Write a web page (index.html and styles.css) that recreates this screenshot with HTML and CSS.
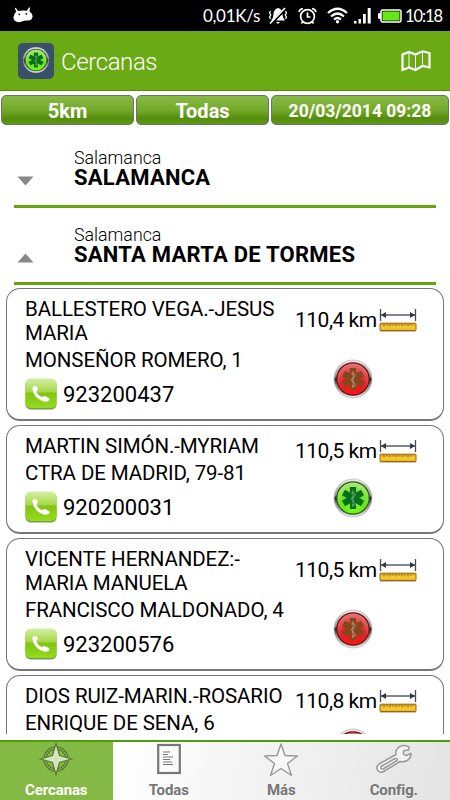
FILE: index.html
```
<!DOCTYPE html>
<html lang="es">
<head>
  <meta charset="UTF-8">
  <title>Cercanas</title>
  <link rel="stylesheet" href="styles.css">
</head>
<body>
  <!-- iconos compartidos -->
  <svg class="defs" width="0" height="0">
    <defs>
      <linearGradient id="metal" x1="0" y1="0" x2="0" y2="1">
        <stop offset="0" stop-color="#eee"/><stop offset=".42" stop-color="#999"/>
        <stop offset=".5" stop-color="#222"/><stop offset=".65" stop-color="#888"/><stop offset="1" stop-color="#e8e8e8"/>
      </linearGradient>
      <radialGradient id="verde" cx=".5" cy=".75" r=".75">
        <stop offset="0" stop-color="#7cff20"/><stop offset=".5" stop-color="#6be21c"/><stop offset="1" stop-color="#b0e982"/>
      </radialGradient>
      <radialGradient id="rojo" cx=".5" cy=".8" r=".8">
        <stop offset="0" stop-color="#ff1010"/><stop offset=".5" stop-color="#de2428"/><stop offset="1" stop-color="#e27a7b"/>
      </radialGradient>
      <linearGradient id="tel" x1="0" y1="0" x2="0" y2="1">
        <stop offset="0" stop-color="#d5efa5"/><stop offset=".45" stop-color="#a6d848"/>
        <stop offset=".5" stop-color="#80c410"/><stop offset="1" stop-color="#94dc1c"/>
      </linearGradient>
      <linearGradient id="oro" x1="0" y1="0" x2="0" y2="1">
        <stop offset="0" stop-color="#d79a14"/><stop offset=".5" stop-color="#f6cf32"/><stop offset="1" stop-color="#e9b51c"/>
      </linearGradient>
    </defs>
    <symbol id="cruz" viewBox="-12 -12 24 24">
      <g>
        <rect x="-3.1" y="-11" width="6.2" height="22"/>
        <rect x="-3.1" y="-11" width="6.2" height="22" transform="rotate(60)"/>
        <rect x="-3.1" y="-11" width="6.2" height="22" transform="rotate(120)"/>
      </g>
      <path d="M0-8V9M-2-5Q3-6 2-3T-1 0T1 4T-1 7" fill="none" stroke="#fff" stroke-opacity=".35" stroke-width="1"/>
    </symbol>
    <symbol id="abierta" viewBox="0 0 40 40">
      <circle cx="20" cy="20" r="19" fill="url(#metal)" stroke="#bbb" stroke-width=".8"/>
      <circle cx="20" cy="20" r="16.800" fill="#245c10"/>
      <circle cx="20" cy="20" r="15.600" fill="url(#verde)"/>
      <use href="#cruz" x="8" y="8" width="24" height="24" fill="#08701c"/>
    </symbol>
    <symbol id="cerrada" viewBox="0 0 40 40">
      <circle cx="20" cy="20" r="19" fill="url(#metal)" stroke="#bbb" stroke-width=".8"/>
      <circle cx="20" cy="20" r="16.800" fill="#6d0c0c"/>
      <circle cx="20" cy="20" r="15.600" fill="url(#rojo)"/>
      <use href="#cruz" x="8" y="8" width="24" height="24" fill="#85471c"/>
    </symbol>
    <symbol id="telefono" viewBox="0 0 32 32">
      <rect x=".5" y="1.500" width="31" height="30" rx="5" fill="#7a9a4c"/>
      <rect x=".5" y=".5" width="31" height="29.500" rx="5" fill="url(#tel)"/>
      <path d="M7.500 11Q7 8.300 9.500 8Q12 7.800 12.700 10Q13.200 12 11.500 13.200Q12.500 17 17 19.200Q18.600 17.600 20.500 18.300L24 20.300Q25.400 21.500 23.700 23Q20.500 24.800 15.500 22.300Q8.500 18.500 7.500 11Z" fill="#fff"/>
    </symbol>
    <symbol id="regla" viewBox="0 0 38 24">
      <path d="M1.500 1V13M36.500 1V13" stroke="#454a58" stroke-width="1.300"/>
      <path d="M2 7H36" stroke="#5a5d68" stroke-width="1.500"/>
      <path d="M2 7L7 4V10ZM36 7L31 4V10Z" fill="#33363f"/>
      <path d="M1 23.500H37" stroke="#aaa" stroke-width=".7"/>
      <rect x="1" y="15.200" width="36" height="7.300" rx=".6" fill="url(#oro)" stroke="#9b650e"/>
      <path d="M5 16V18.500M8 16V17.500M11 16V18.500M14 16V17.500M17 16V18.500M20 16V17.500M23 16V18.500M26 16V17.500M29 16V18.500M32 16V17.500" stroke="#8a5c10" stroke-width=".8"/>
    </symbol>
  </svg>

  <div class="status">
    <svg class="droid" width="21" height="17" viewBox="0 0 21 17" fill="#fff">
      <path d="M1.800 1.200L2.800 .8L5 4Q9 3.200 14 3.800L16 .3L17 .8L16.500 4.500Q20 7 19.500 10Q18.500 13.500 15.500 13.500Q12 13 9 14.500Q5 16 2 14Q-.5 11.500 1 8.500Q1.500 6 3.300 4.800Z"/>
      <circle cx="6.300" cy="7.300" r=".9" fill="#000"/><circle cx="13.300" cy="6.800" r=".9" fill="#000"/>
    </svg>
    <span class="speed">0,01K/s</span>
    <svg class="st-mute" width="20" height="18" viewBox="0 0 20 18" fill="none" stroke="#fff">
      <path d="M10 1Q14.500 2 14.500 8Q15 11 17 13.500H3Q5.500 11 5.500 7Q6 2 10 1ZM8 15H12L10 17Z" fill="#fff" stroke="none"/>
      <path d="M17.500 1.500L3 17" stroke="#000" stroke-width="3"/>
      <path d="M17 1L2 16.500" stroke-width="1.700"/>
      <path d="M2.500 4L1.500 6L2.800 8L1.500 10L2.500 12M17.500 4L18.500 6L17.200 8L18.500 10L17.500 12" stroke-width="1.300"/>
    </svg>
    <svg class="st-alarm" width="19" height="18" viewBox="0 0 19 18" fill="none" stroke="#fff" stroke-width="1.700">
      <circle cx="9.500" cy="9.500" r="6.900"/>
      <path d="M9.500 5.500V10H12.500M1 5Q1.500 2 5 1.500M18 5Q17.500 2 14 1.500M5 14.500L3.500 16.500M14 14.500L15.500 16.500"/>
    </svg>
    <svg class="st-wifi" width="21" height="17" viewBox="0 0 21 17" fill="none" stroke="#fff" stroke-width="2.200">
      <path d="M1 6Q10.500-2.500 20 6M4 9.500Q10.500 3.500 17 9.500M7 12.500Q10.500 9.500 14 12.500"/>
      <circle cx="10.500" cy="14.800" r="1.700" fill="#fff" stroke="none"/>
    </svg>
    <svg class="st-signal" width="17" height="16" viewBox="0 0 17 16" fill="#fff">
      <rect x="0" y="13" width="2.500" height="2.500"/><rect x="4.500" y="11" width="2.500" height="4.500"/><rect x="9" y="6" width="2.800" height="9.500"/><rect x="13.700" y="0" width="3" height="15.500"/>
    </svg>
    <svg class="st-battery" width="24" height="14" viewBox="0 0 24 14">
      <rect x="0" y="4" width="3" height="6" rx="1" fill="#fff"/>
      <rect x="3" y="1" width="20" height="12" rx="1.500" fill="#111" stroke="#fff" stroke-width="1.500"/>
      <rect x="4.500" y="2.500" width="17" height="9" fill="#63e813"/>
    </svg>
    <span class="clock">10:18</span>
  </div>

  <div class="appbar">
    <svg class="logo" width="36" height="36" viewBox="0 0 36 36">
      <rect width="36" height="36" rx="5" fill="#39506b"/>
      <use href="#abierta" x="4.500" y="3.500" width="27" height="27"/>
    </svg>
    <h1>Cercanas</h1>
    <svg class="map" width="30" height="22" viewBox="0 0 30 22" fill="none" stroke="#fff" stroke-width="2.200">
      <path d="M1.500 4.500L8 2L14.500 4.500L21.500 1.300L28.500 3V17.500L21.500 16L14.500 20L8 17.500L1.500 20Z"/>
      <path d="M8 2V17.500M14.500 4.500V20M21.500 1.300V16" stroke-width="1"/>
    </svg>
  </div>

  <div class="filters">
    <button class="filter">5km</button>
    <button class="filter">Todas</button>
    <button class="filter date">20/03/2014 09:28</button>
  </div>

  <div class="list">
    <div class="group">
      <svg class="arrow" width="17" height="10" viewBox="0 0 17 10"><path d="M.5.500H16.500L8.500 9.500Z" fill="#888"/></svg>
      <div>
        <div class="province">Salamanca</div>
        <div class="town">SALAMANCA</div>
      </div>
    </div>
    <div class="group">
      <svg class="arrow" width="17" height="10" viewBox="0 0 17 10"><path d="M.5 9.500H16.500L8.500.500Z" fill="#888"/></svg>
      <div>
        <div class="province">Salamanca</div>
        <div class="town">SANTA MARTA DE TORMES</div>
      </div>
    </div>

    <div class="cards">
      <div class="card">
        <div class="info">
          <div class="name">BALLESTERO VEGA.-JESUS<br>MARIA</div>
          <div class="address">MONSEÑOR ROMERO, 1</div>
          <div class="phone"><svg width="32" height="32"><use href="#telefono"/></svg>923200437</div>
        </div>
        <div class="side">
          <div class="distance">110,4 km<svg width="38" height="24"><use href="#regla"/></svg></div>
          <div class="state"><svg width="40" height="40"><use href="#cerrada"/></svg></div>
        </div>
      </div>

      <div class="card">
        <div class="info">
          <div class="name">MARTIN SIMÓN.-MYRIAM</div>
          <div class="address">CTRA DE MADRID, 79-81</div>
          <div class="phone"><svg width="32" height="32"><use href="#telefono"/></svg>920200031</div>
        </div>
        <div class="side">
          <div class="distance">110,5 km<svg width="38" height="24"><use href="#regla"/></svg></div>
          <div class="state"><svg width="40" height="40"><use href="#abierta"/></svg></div>
        </div>
      </div>

      <div class="card">
        <div class="info">
          <div class="name">VICENTE HERNANDEZ:-<br>MARIA MANUELA</div>
          <div class="address">FRANCISCO MALDONADO, 4</div>
          <div class="phone"><svg width="32" height="32"><use href="#telefono"/></svg>923200576</div>
        </div>
        <div class="side">
          <div class="distance">110,5 km<svg width="38" height="24"><use href="#regla"/></svg></div>
          <div class="state"><svg width="40" height="40"><use href="#cerrada"/></svg></div>
        </div>
      </div>

      <div class="card">
        <div class="info">
          <div class="name">DIOS RUIZ-MARIN.-ROSARIO</div>
          <div class="address">ENRIQUE DE SENA, 6</div>
          <div class="phone"></div>
        </div>
        <div class="side">
          <div class="distance">110,8 km<svg width="38" height="24"><use href="#regla"/></svg></div>
          <div class="state"><svg width="40" height="40"><use href="#cerrada"/></svg></div>
        </div>
      </div>
    </div>
  </div>

  <div class="tabs">
    <div class="tab active">
      <svg width="34" height="34" viewBox="0 0 34 34">
        <circle cx="17" cy="17" r="11" fill="none" stroke="#587d31" stroke-width="3.500"/>
        <circle cx="17" cy="17" r="11" fill="none" stroke="#91b865" stroke-width="1"/>
        <path d="M17 1.500L20.500 13.500L32.500 17L20.500 20.500L17 32.500L13.500 20.500L1.500 17L13.500 13.500Z" fill="#d3e5bd" stroke="#587d31" stroke-width="1.200"/>
      </svg>
      <span>Cercanas</span>
    </div>
    <div class="tab">
      <svg width="34" height="34" viewBox="0 0 34 34" fill="none" stroke="#777">
        <rect x="6.200" y="3" width="21.600" height="28" stroke-width="2.200"/>
        <path d="M11 10H18M11 12.500H16M11 15H21M11 17.500H18M11 20H20M11 22.500H21" stroke-width="1"/>
      </svg>
      <span>Todas</span>
    </div>
    <div class="tab">
      <svg width="36" height="36" viewBox="0 0 36 36">
        <path d="M18 2L22 13.500L34.500 14L24.500 21.500L28.500 33.500L18 26.500L7.500 33.500L11.500 21.500L1.500 14L14 13.500Z" fill="#f7f7f7" stroke="#999" stroke-width="1.400" stroke-linejoin="round"/>
      </svg>
      <span>Más</span>
    </div>
    <div class="tab">
      <svg width="38" height="34" viewBox="0 0 38 34" fill="#f4f4f4" stroke="#999" stroke-width="1.500" stroke-linejoin="round">
        <path d="M34 5Q29 2 24 5Q20 8 21 12.500L4 22Q.5 25 2.500 28Q4.500 31.500 8.500 29.500L25 19.500Q29 20.500 33 18Q36.500 15 36 11.500L31 13.500Q27 13 29 8.500L33.500 8Z"/>
        <path d="M6 24.500L20 16.500Q23 16 22 18.500L8 27Q5 27.500 6 24.500Z"/>
      </svg>
      <span>Config.</span>
    </div>
  </div>
</body>
</html>
```

FILE: styles.css
```
* {
  box-sizing: border-box;
}
body {
  margin: 0;
  width: 450px;
  height: 800px;
  overflow: hidden;
  display: flex;
  flex-direction: column;
  background: #fff;
  color: #000;
  font-family: Roboto, "Noto Sans", sans-serif;
}
svg {
  display: block;
  flex: none;
}
.defs {
  position: absolute;
}

/* barra de estado */
.status {
  height: 31px;
  flex: none;
  display: flex;
  align-items: center;
  padding: 0 8px 0 13px;
  background: #000;
  color: #fff;
  font-family: Lato, sans-serif;
  font-size: 17px;
}
.speed {
  margin-left: auto;
  width: 57px;
  white-space: nowrap;
  letter-spacing: -0.3px;
}
.st-mute { margin-left: 8px; }
.st-alarm { margin-left: 10px; }
.st-wifi { margin-left: 10px; }
.st-signal { margin-left: 6px; }
.st-battery { margin-left: 7px; }
.clock {
  width: 37px;
  margin-left: 3px;
  white-space: nowrap;
  font-size: 16.500px;
  letter-spacing: -1.1px;
}

/* cabecera */
.appbar {
  height: 60px;
  flex: none;
  display: flex;
  align-items: center;
  padding: 1px 19px 0 18px;
  background: #6aaa15;
  border-bottom: 1px solid #528d0b;
}
.appbar h1 {
  margin: 1px 0 0 7px;
  color: #fff;
  font-size: 24px;
  font-weight: 300;
  letter-spacing: -0.4px;
}
.map {
  margin-left: auto;
}

/* filtros */
.filters {
  flex: none;
  display: grid;
  grid-template-columns: 133px 133px 178px;
  gap: 2px;
  padding: 4px 1px 0;
}
.filter {
  height: 30px;
  padding: 2px 0 0;
  border: 1px solid #707070;
  border-radius: 5px;
  background: linear-gradient(#87b944, #74aa2c 50%, #548d0c 80%, #5e9a12);
  color: #fff;
  font: bold 20px Roboto, sans-serif;
}
.filter.date {
  font-size: 17.500px;
}

/* listado */
.list {
  height: 609px;
  flex: none;
  overflow: hidden;
  padding-top: 6px;
}
.group {
  height: 77px;
  margin: 0 14px;
  padding: 17px 0 0 3px;
  display: flex;
  border-bottom: 3px solid #62a60a;
}
.arrow {
  margin: 28px 40px 0 0;
}
.province {
  font-size: 17.800px;
  line-height: 19px;
  font-weight: 300;
}
.town {
  font-size: 22px;
  line-height: 22px;
  font-weight: bold;
  letter-spacing: 0.25px;
}
.cards {
  display: flex;
  flex-direction: column;
  gap: 4px;
  padding: 3px 6px 0;
}
.card {
  display: flex;
  padding: 0 0 0 18px;
  border: 1px solid #777;
  border-bottom-width: 2px;
  border-radius: 14px;
}
.info {
  width: 270px;
  padding: 8px 0 9px;
  font-size: 20.500px;
  letter-spacing: -0.1px;
  white-space: nowrap;
}
.name {
  line-height: 24px;
}
.address {
  line-height: 24px;
  padding-top: 3px;
}
.phone {
  height: 38px;
  padding-top: 6px;
  display: flex;
  align-items: center;
  gap: 6px;
  font-size: 22px;
  letter-spacing: 0;
}
.side {
  display: flex;
  flex-direction: column;
  padding: 2px 0 11px;
}
.distance, .state {
  flex: 1;
  display: flex;
  align-items: center;
}
.distance {
  gap: 2px;
  font-size: 21px;
  letter-spacing: -0.5px;
  white-space: nowrap;
}
.state {
  padding-left: 38px;
}

/* pestañas */
.tabs {
  height: 60px;
  flex: none;
  margin-top: auto;
  display: grid;
  grid-template-columns: repeat(4, 1fr);
  border-top: 2px solid #4da00c;
  background: linear-gradient(100deg, #fff 25%, #e4e4e4);
}
.tab {
  display: flex;
  flex-direction: column;
  align-items: center;
  justify-content: space-between;
  padding-bottom: 1px;
  color: #777;
  font-size: 15px;
  font-weight: bold;
  letter-spacing: -0.1px;
}
.tab.active {
  background: #85b945;
  color: #fff;
}
```
